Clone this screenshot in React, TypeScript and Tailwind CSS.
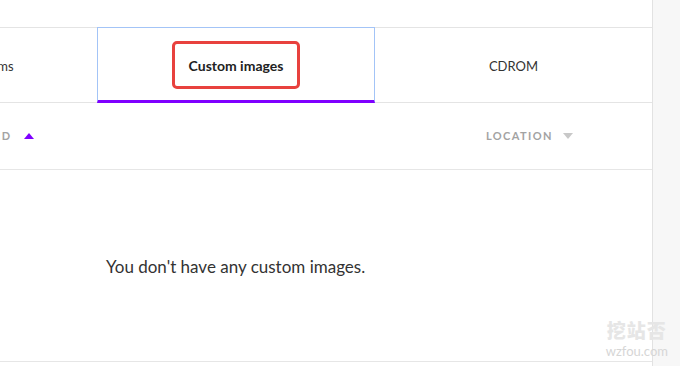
export default function App() {
  const tabs = ['Operating systems', 'Custom images', 'CDROM'];
  const active = 1;

  return (
    <div className="relative flex w-[680px] h-[366px] overflow-hidden bg-[#f7f7f7] font-['Lato','Noto_Sans','Noto_Sans_CJK_SC',sans-serif]">
      <main className="w-[653px] shrink-0 bg-white border-r border-[#e2e2e2] flex flex-col overflow-hidden">
        <div className="h-[27px] shrink-0" />

        {/* Tabs */}
        <div className="flex h-[76px] shrink-0 ml-[-180px]">
          {tabs.map((tab, i) =>
            i === active ? (
              <div
                key={tab}
                className="w-[278px] shrink-0 flex items-center justify-center pt-[2px] border-x border-t border-[#a3c4f7] border-b-[3px] border-b-[#7f00ff]"
              >
                <span className="px-[14px] h-[48px] inline-flex items-center border-[3px] border-[#e8413e] rounded-[5px] text-[14px] font-bold text-[#222]">
                  {tab}
                </span>
              </div>
            ) : (
              <div
                key={tab}
                className={`w-[277px] shrink-0 flex items-center justify-center pt-[3px] border-y border-[#e4e4e4] text-[13px] text-[#333] ${i === 0 ? 'pl-[4px]' : ''}`}
              >
                {tab}
              </div>
            )
          )}
        </div>

        {/* Column headers */}
        <div className="flex items-center h-[67px] shrink-0 border-b border-[#e6e6e6] text-[11px] font-bold tracking-[1.4px] text-[#a3a3a3]">
          <div className="flex items-center ml-[-3px] w-[480px]">
            <span>ID</span>
            <svg width="10" height="6" viewBox="0 0 10 6" className="ml-[13px] mb-[1px]">
              <path d="M0 6 L5 0 L10 6 Z" fill="#7f00ff" />
            </svg>
          </div>
          <div className="flex items-center ml-[9px]">
            <span>LOCATION</span>
            <svg width="10" height="6" viewBox="0 0 10 6" className="ml-[10px]">
              <path d="M0 0 L10 0 L5 6 Z" fill="#c8c8c8" />
            </svg>
          </div>
        </div>

        {/* Empty state */}
        <div className="h-[192px] shrink-0 border-b border-[#e6e6e6]">
          <p className="mt-[84px] ml-[106px] text-[17px] text-[#333]">You don't have any custom images.</p>
        </div>
      </main>

      {/* watermark */}
      <div className="absolute right-[12px] bottom-[8px] flex flex-col items-center leading-none select-none pointer-events-none">
        <span className="text-[19px] font-black text-[#e6e6e6] tracking-[1px]">挖站否</span>
        <span className="mt-[5px] text-[13px] text-[#d6d6d6]">wzfou.com</span>
      </div>
    </div>
  );
}
